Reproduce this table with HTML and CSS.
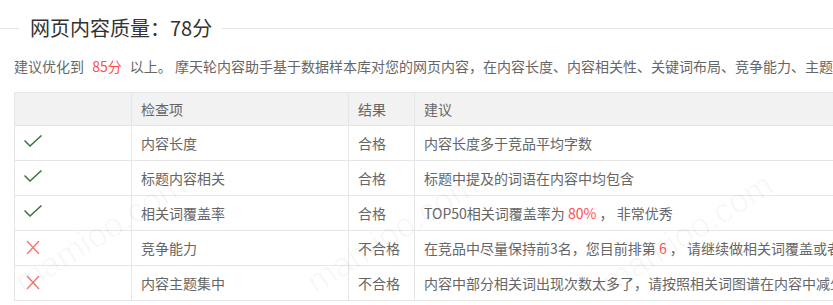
FILE: index.html
```html
<!DOCTYPE html>
<html lang="zh-CN">
<head>
<meta charset="utf-8">
<title>网页内容质量</title>
<link rel="stylesheet" href="styles.css">
</head>
<body>
<div class="page">
  <div class="title-row">
    <span class="title-line title-line-left"></span>
    <h2 class="title">网页内容质量：78分</h2>
    <span class="title-line title-line-right"></span>
  </div>
  <p class="intro">建议优化到 <span class="hl">85分</span> 以上。 摩天轮内容助手基于数据样本库对您的网页内容，在内容长度、内容相关性、关键词布局、竞争能力、主题集中度等方面进行了综合评估。</p>
  <table class="check-table">
    <colgroup>
      <col class="c-icon"><col class="c-item"><col class="c-result"><col class="c-advice">
    </colgroup>
    <thead>
      <tr><th></th><th>检查项</th><th>结果</th><th>建议</th></tr>
    </thead>
    <tbody>
      <tr>
        <td><svg class="ic" width="18" height="12" viewBox="0 0 18 12"><polyline points="0.5,5.5 6,11 17.5,0.5" fill="none" stroke="#3a7440" stroke-width="1.5"/></svg></td>
        <td>内容长度</td><td>合格</td><td>内容长度多于竞品平均字数</td>
      </tr>
      <tr>
        <td><svg class="ic" width="18" height="12" viewBox="0 0 18 12"><polyline points="0.5,5.5 6,11 17.5,0.5" fill="none" stroke="#3a7440" stroke-width="1.5"/></svg></td>
        <td>标题内容相关</td><td>合格</td><td>标题中提及的词语在内容中均包含</td>
      </tr>
      <tr>
        <td><svg class="ic" width="18" height="12" viewBox="0 0 18 12"><polyline points="0.5,5.5 6,11 17.5,0.5" fill="none" stroke="#3a7440" stroke-width="1.5"/></svg></td>
        <td>相关词覆盖率</td><td>合格</td><td>TOP50相关词覆盖率为 <span class="hl">80%</span> ， 非常优秀</td>
      </tr>
      <tr>
        <td><svg class="ic ic-x" width="14" height="15" viewBox="0 0 14 15"><path d="M1 1 L13 14 M13 1 L1 14" fill="none" stroke="#f47373" stroke-width="1.3"/></svg></td>
        <td>竞争能力</td><td>不合格</td><td>在竞品中尽量保持前3名，您目前排第 <span class="hl">6</span> ， 请继续做相关词覆盖或者增加内容长度</td>
      </tr>
      <tr>
        <td><svg class="ic ic-x" width="14" height="15" viewBox="0 0 14 15"><path d="M1 1 L13 14 M13 1 L1 14" fill="none" stroke="#f47373" stroke-width="1.3"/></svg></td>
        <td>内容主题集中</td><td>不合格</td><td>内容中部分相关词出现次数太多了，请按照相关词图谱在内容中减少使用</td>
      </tr>
    </tbody>
  </table>
  <span class="wm wm-1">mamioo.com</span>
  <span class="wm wm-2">mamioo.com</span>
  <span class="wm wm-3">mamioo.com</span>
</div>
</body>
</html>
```
FILE: styles.css
```css
html, body {
  margin: 0;
  padding: 0;
  background: #fff;
  overflow: hidden;
}
body {
  font-family: "Noto Sans CJK SC", "Liberation Sans", sans-serif;
  color: #666;
}
.page {
  position: relative;
  width: 833px;
  height: 305px;
  overflow: hidden;
}
.title-row {
  display: flex;
  align-items: center;
  height: 56px;
}
.title-line {
  height: 1px;
  background: #e6e6e6;
}
.title-line-left {
  width: 19px;
  margin-right: 11px;
}
.title-line-right {
  flex: 1;
  margin-left: 10px;
}
.title {
  margin: 0;
  font-size: 20px;
  font-weight: normal;
  color: #333;
  line-height: 28px;
  white-space: nowrap;
}
.intro {
  margin: 0 0 0 14px;
  font-size: 14px;
  line-height: 20px;
  height: 20px;
  white-space: nowrap;
  color: #666;
}
.intro .hl {
  margin: 0 5px;
}
.hl {
  color: #ff4f4f;
}
.check-table {
  margin: 16px 0 0 14px;
  border-collapse: collapse;
  table-layout: fixed;
  width: 1000px;
  font-size: 14px;
  color: #666;
}
.c-icon { width: 117px; }
.c-item { width: 217px; }
.c-result { width: 66px; }
.c-advice { width: 600px; }
.check-table th,
.check-table td {
  border: 1px solid #e6e6e6;
  text-align: left;
  white-space: nowrap;
  overflow: hidden;
  line-height: 20px;
  vertical-align: middle;
}
.check-table th {
  background: #f2f2f2;
  font-weight: normal;
  padding: 6px 9px;
}
.check-table td {
  padding: 7px 9px;
}
.ic {
  display: block;
  margin-top: -4px;
}
.ic-x {
  margin-left: 2px;
  margin-top: -2px;
}
.wm {
  position: absolute;
  font-family: "Liberation Sans", sans-serif;
  font-size: 34px;
  color: rgba(0, 0, 0, 0.03);
  transform: rotate(-32deg);
  transform-origin: left bottom;
  white-space: nowrap;
  pointer-events: none;
}
.wm-1 { left: 28px; top: 262px; }
.wm-2 { left: 320px; top: 262px; }
.wm-3 { left: 615px; top: 262px; }
```
